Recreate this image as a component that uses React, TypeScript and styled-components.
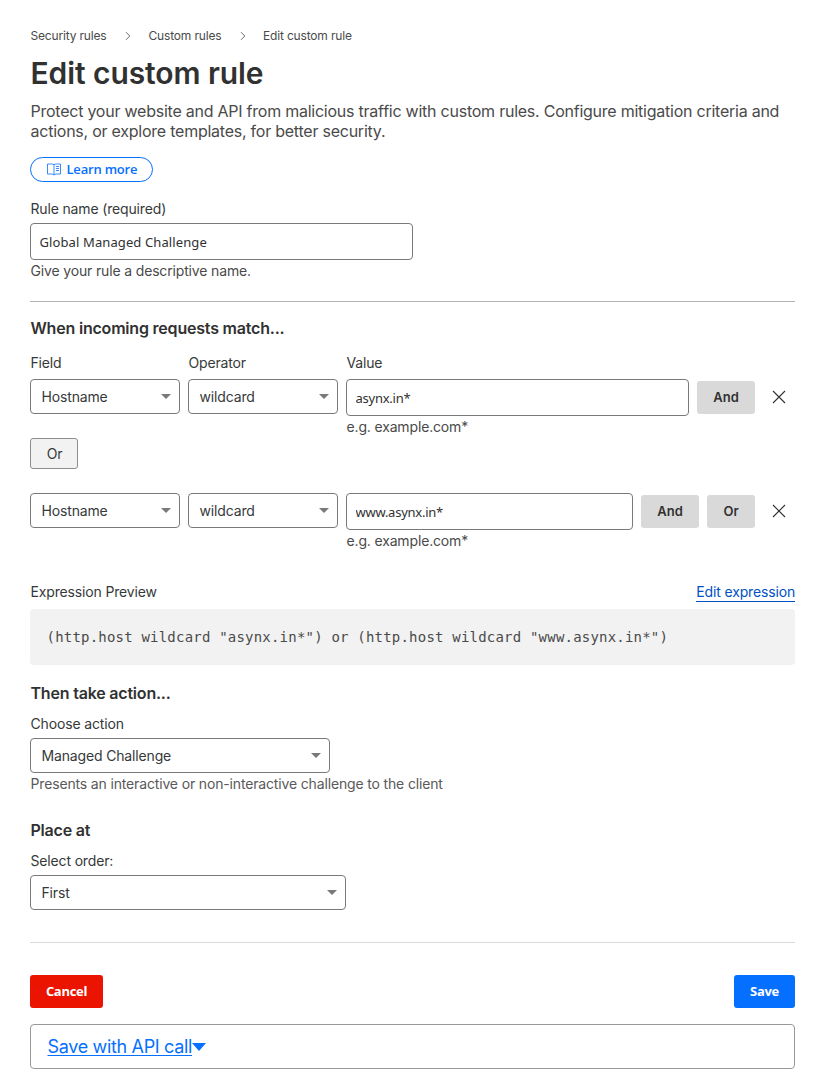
import React from "react";
import styled, { createGlobalStyle } from "styled-components";

const GlobalStyle = createGlobalStyle`
  *, *::before, *::after { box-sizing: border-box; }
  body {
    margin: 0;
    background: #fff;
    color: #36393a;
    font-family: Inter, "Liberation Sans", sans-serif;
    font-size: 14px;
    line-height: 20px;
    letter-spacing: -0.155px;
  }
  button, input { font: inherit; color: inherit; letter-spacing: inherit; margin: 0; }
`;

const Page = styled.main`
  display: flex;
  flex-direction: column;
  align-items: stretch;
  height: 1092px;
  padding: 26px 28px 0 30px;
`;

const Breadcrumbs = styled.nav`
  display: flex;
  align-items: center;
  height: 20px;
  padding-left: 0.5px;
  font-size: 12px;
  letter-spacing: -0.17px;
  color: #4a4a4a;
`;

const Crumb = styled.span<{ $width?: number }>`
  width: ${(p) => (p.$width ? `${p.$width}px` : "auto")};
  white-space: nowrap;
`;

const CrumbArrow = styled.svg`
  width: 8px;
  height: 10px;
  margin: 0 16.5px 0 17px;
`;

const Title = styled.h1`
  margin: 7px 0 0;
  padding-left: 0.5px;
  font-size: 30px;
  line-height: 40px;
  font-weight: 600;
  letter-spacing: -0.08px;
  color: #313131;
`;

const Intro = styled.p`
  margin: 8px 0 0;
  padding-left: 0.5px;
  font-size: 16px;
  line-height: 20px;
  letter-spacing: -0.24px;
  color: #4a4a4a;
  white-space: nowrap;
`;

const LearnMore = styled.button`
  display: flex;
  align-items: center;
  align-self: flex-start;
  width: 123px;
  height: 25px;
  margin-top: 16px;
  padding: 0 0 2px 16px;
  gap: 5.5px;
  border: 1px solid #056fff;
  border-radius: 13px;
  background: #fff;
  color: #056fff;
  font-family: "Open Sans", sans-serif;
  font-size: 13px;
  font-weight: 600;
  letter-spacing: -0.2px;
  white-space: nowrap;
`;

const Label = styled.label<{ $top?: number }>`
  display: block;
  height: 20px;
  margin-top: ${(p) => p.$top ?? 0}px;
  padding-left: 0.5px;
  white-space: nowrap;
`;

const Help = styled.div<{ $soft?: boolean }>`
  height: 20px;
  margin-top: 1px;
  padding-left: 0.5px;
  color: ${(p) => (p.$soft ? "#595959" : "#4a4a4a")};
  white-space: nowrap;
`;

const NameField = styled.div`
  margin-top: 4px;
`;

const TextInput = styled.input<{ $width?: string; $spacing?: number }>`
  display: block;
  width: ${(p) => p.$width ?? "100%"};
  height: 37px;
  padding: 1px 8.5px 0;
  border: 1px solid #797979;
  border-radius: 4px;
  outline: none;
  background: #fff;
  color: #313131;
  font-family: "Noto Sans", sans-serif;
  font-size: 13px;
  letter-spacing: ${(p) => p.$spacing ?? -0.25}px;
`;

const Rule = styled.hr<{ $top: number; $color: string }>`
  flex: none;
  width: 100%;
  height: 1px;
  margin: ${(p) => p.$top}px 0 0;
  border: 0;
  background: ${(p) => p.$color};
`;

const Heading = styled.h2<{ $top: number }>`
  height: 20px;
  margin: ${(p) => p.$top}px 0 0;
  padding-left: 0.5px;
  font-size: 16px;
  line-height: 20px;
  font-weight: 600;
  letter-spacing: -0.2px;
  color: #313131;
  white-space: nowrap;
`;

const ColumnLabels = styled.div`
  display: grid;
  grid-template-columns: 150px 150px 1fr;
  column-gap: 8px;
  margin-top: 15px;
`;

const Condition = styled.div<{ $top: number }>`
  display: flex;
  align-items: flex-start;
  gap: 8px;
  height: 59px;
  margin-top: ${(p) => p.$top}px;
`;

const ValueColumn = styled.div`
  flex: 1;
  min-width: 0;
`;

const SelectBox = styled.button<{ $width: number; $top?: number }>`
  display: flex;
  flex: none;
  align-items: center;
  justify-content: space-between;
  width: ${(p) => p.$width}px;
  height: 35px;
  margin-top: ${(p) => p.$top ?? 0}px;
  padding: 0 8px 0 10.5px;
  border: 1px solid #797979;
  border-radius: 4px;
  background: #fff;
  text-align: left;
  white-space: nowrap;
`;

const LogicButton = styled.button<{ $width: number }>`
  flex: none;
  width: ${(p) => p.$width}px;
  height: 33px;
  margin-top: 2px;
  padding: 0 0 1px;
  border: 0;
  border-radius: 3px;
  background: #d9d9d9;
  color: #313131;
  font-size: 13px;
  font-weight: 600;
  letter-spacing: 0;
`;

const OrButton = styled.button`
  align-self: flex-start;
  width: 48px;
  height: 31px;
  padding: 0 0 0 1px;
  border: 1px solid #8d8d8d;
  border-radius: 3px;
  background: #f2f2f2;
`;

const RemoveButton = styled.button`
  display: flex;
  flex: none;
  align-items: center;
  justify-content: center;
  width: 32px;
  height: 36px;
  padding: 0;
  border: 0;
  background: none;
`;

const PreviewHeader = styled.div`
  display: flex;
  justify-content: space-between;
  height: 20px;
  margin-top: 30px;
`;

const EditLink = styled.a`
  height: 20px;
  border-bottom: 1px solid #0051c3;
  color: #0051c3;
  white-space: nowrap;
`;

const Expression = styled.pre`
  display: flex;
  align-items: center;
  height: 56px;
  margin: 7px 0 0;
  padding: 0 16.5px;
  border-radius: 4px;
  background: #f2f2f2;
  color: #4a4a4a;
  font-family: "DejaVu Sans Mono", monospace;
  font-size: 14px;
  letter-spacing: 0.205px;
`;

const Actions = styled.div`
  display: flex;
  justify-content: space-between;
  margin-top: 32px;
`;

const ActionButton = styled.button<{ $width: number; $fill: string }>`
  width: ${(p) => p.$width}px;
  height: 33px;
  padding: 0 0 2px;
  border: 0;
  border-radius: 3px;
  background: ${(p) => p.$fill};
  color: #fff;
  font-family: "Open Sans", sans-serif;
  font-size: 13px;
  font-weight: 700;
  letter-spacing: -0.3px;
`;

const ApiPanel = styled.div`
  display: flex;
  align-items: center;
  height: 45px;
  margin-top: 16px;
  padding-left: 16.5px;
  border: 1px solid #999;
  border-radius: 4px;
`;

const ApiLink = styled.a`
  color: #056fff;
  font-size: 18px;
  letter-spacing: -0.33px;
  text-decoration: underline;
  text-decoration-thickness: 1px;
  text-underline-offset: 2px;
  white-space: nowrap;
`;

const Chevron = () => (
  <CrumbArrow viewBox="0 0 8 10" fill="none" stroke="#6a6a6a">
    <path d="M2 1.2 L5.8 5 L2 8.8" />
  </CrumbArrow>
);

const Caret = () => (
  <svg width="10" height="5" viewBox="0 0 10 5" fill="#797979">
    <path d="M0 0H10L5 5Z" />
  </svg>
);

const Select = ({ width, value, top }: { width: number; value: string; top?: number }) => (
  <SelectBox type="button" $width={width} $top={top}>
    <span>{value}</span>
    <Caret />
  </SelectBox>
);

const Remove = () => (
  <RemoveButton type="button" aria-label="Remove">
    <svg width="14" height="14" viewBox="0 0 14 14" fill="none" stroke="#313131" strokeWidth="1.1">
      <path d="M1 1L13 13M13 1L1 13" />
    </svg>
  </RemoveButton>
);

const BookIcon = () => (
  <svg width="14" height="14" viewBox="0 0 14 14" fill="none" stroke="#056fff" strokeWidth="0.8">
    <path d="M7 2.7C6.2 2.1 5.4 2 4.5 2H0.5V12H4.8C5.8 12 6.5 12.3 7 13.1C7.5 12.3 8.2 12 9.2 12H13.5V2H9.5C8.6 2 7.8 2.1 7 2.7ZM7 2.7V13.1M9 4.5H12M9 6.5H12M9 8.5H12" />
  </svg>
);

export default function App() {
  return (
    <>
      <GlobalStyle />
      <Page>
        <Breadcrumbs>
          <Crumb $width={76.5}>Security rules</Crumb>
          <Chevron />
          <Crumb $width={73}>Custom rules</Crumb>
          <Chevron />
          <Crumb>Edit custom rule</Crumb>
        </Breadcrumbs>
        <Title>Edit custom rule</Title>
        <Intro>
          Protect your website and API from malicious traffic with custom rules. Configure mitigation criteria and
          <br />
          actions, or explore templates, for better security.
        </Intro>
        <LearnMore type="button">
          <BookIcon />
          Learn more
        </LearnMore>

        <Label $top={17}>Rule name (required)</Label>
        <NameField>
          <TextInput $width="383px" $spacing={0.11} defaultValue="Global Managed Challenge" />
        </NameField>
        <Help>Give your rule a descriptive name.</Help>
        <Rule $top={20} $color="#b3b3b3" />

        <Heading $top={16}>When incoming requests match...</Heading>
        <ColumnLabels>
          <Label>Field</Label>
          <Label>Operator</Label>
          <Label>Value</Label>
        </ColumnLabels>
        <Condition $top={6}>
          <Select width={150} value="Hostname" />
          <Select width={150} value="wildcard" />
          <ValueColumn>
            <TextInput defaultValue="asynx.in*" />
            <Help>e.g. example.com*</Help>
          </ValueColumn>
          <LogicButton $width={58}>And</LogicButton>
          <Remove />
        </Condition>
        <OrButton type="button">Or</OrButton>
        <Condition $top={24}>
          <Select width={150} value="Hostname" />
          <Select width={150} value="wildcard" />
          <ValueColumn>
            <TextInput defaultValue="www.asynx.in*" />
            <Help>e.g. example.com*</Help>
          </ValueColumn>
          <LogicButton $width={58}>And</LogicButton>
          <LogicButton $width={48}>Or</LogicButton>
          <Remove />
        </Condition>

        <PreviewHeader>
          <Label as="span">Expression Preview</Label>
          <EditLink>Edit expression</EditLink>
        </PreviewHeader>
        <Expression>{`(http.host wildcard "asynx.in*") or (http.host wildcard "www.asynx.in*")`}</Expression>

        <Heading $top={18}>Then take action...</Heading>
        <Label $top={11}>Choose action</Label>
        <Select width={300} value="Managed Challenge" top={4} />
        <Help $soft>Presents an interactive or non-interactive challenge to the client</Help>

        <Heading $top={26}>Place at</Heading>
        <Label $top={11}>Select order:</Label>
        <Select width={316} value="First" top={4} />
        <Rule $top={32} $color="#d9d9d9" />

        <Actions>
          <ActionButton $width={73} $fill="#eb1400">Cancel</ActionButton>
          <ActionButton $width={61} $fill="#056fff">Save</ActionButton>
        </Actions>
        <ApiPanel>
          <ApiLink>Save with API call</ApiLink>
          <svg width="14" height="8" viewBox="0 0 14 8" fill="#056fff">
            <path d="M0 0H14L7 8Z" />
          </svg>
        </ApiPanel>
      </Page>
    </>
  );
}
